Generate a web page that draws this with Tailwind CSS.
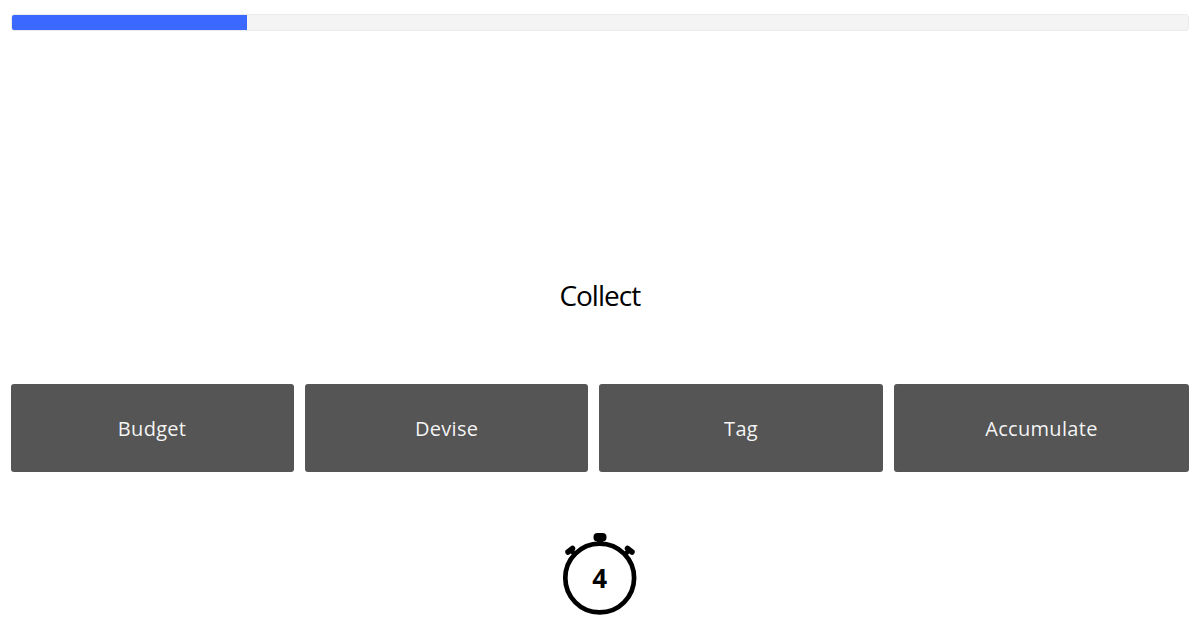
<!DOCTYPE html>
<html lang="en">

<head>
    <meta charset="UTF-8">
    <meta name="viewport" content="width=device-width, initial-scale=1">
    <title>Quiz</title>
    <script src="https://cdn.jsdelivr.net/npm/@tailwindcss/browser@4"></script>
</head>

<body class="bg-white font-['Open_Sans',sans-serif] overflow-hidden">
    <div class="h-[621px] flex flex-col pl-[10.5px] pr-[11px] pt-[14px]">
        <!-- Progress bar -->
        <div class="h-[17px] bg-[#f4f4f4] border border-[#ebebeb] rounded-[3px] overflow-hidden">
            <div class="h-full w-[234px] bg-[#3b69ff] -mt-px -ml-px box-content border border-[#3b69ff]"></div>
        </div>

        <!-- Word -->
        <div class="mt-[244px] h-[40px] flex items-center justify-center text-[28px] leading-[40px] tracking-[-1px] text-black">Collect</div>

        <!-- Answers -->
        <div class="mt-[69px] flex gap-[11.3px]">
            <button class="w-[283.2px] h-[88px] pt-px bg-[#555555] rounded-[3px] text-[20px] text-white/95 tracking-[0.3px]">Budget</button>
            <button class="w-[283.2px] h-[88px] pt-px bg-[#555555] rounded-[3px] text-[20px] text-white/95 tracking-[0.3px]">Devise</button>
            <button class="w-[283.2px] h-[88px] pt-px bg-[#555555] rounded-[3px] text-[20px] text-white/95 tracking-[0.3px]">Tag</button>
            <button class="flex-1 h-[88px] pt-px bg-[#555555] rounded-[3px] text-[20px] text-white/95 tracking-[0.3px]">Accumulate</button>
        </div>

        <!-- Timer -->
        <div class="mt-[59px] flex justify-center">
            <div class="relative w-[80px] h-[84px]">
                <svg class="w-[80px] h-[84px]" viewBox="0 0 80 84" fill="none" stroke="#000">
                    <circle cx="39.700" cy="47" r="34.400" stroke-width="4.700" />
                    <!-- crown -->
                    <path d="M40 8v5" stroke-width="6" />
                    <rect x="33.500" y="2" width="13" height="8.500" rx="4" fill="#000" stroke="none" />
                    <!-- side lugs -->
                    <path d="M16 25l-5-6M64 25l5-6" stroke-width="4.500" />
                    <path d="M8 21l4.500-3.500M72 21l-4.500-3.500" stroke-width="5.500" stroke-linecap="round" />
                </svg>
                <span class="absolute left-0 right-0 top-[47px] -translate-y-1/2 text-center text-[26px] leading-none font-bold text-black">4</span>
            </div>
        </div>
    </div>
</body>

</html>
